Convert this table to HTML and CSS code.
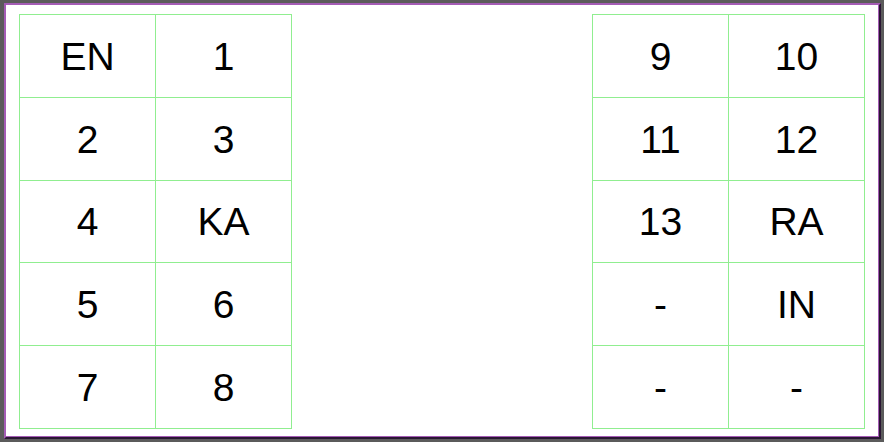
FILE: index.html
```html
<!DOCTYPE html>
<html>
<head>
<meta charset="utf-8">
<link rel="stylesheet" href="styles.css">
</head>
<body>
<div class="frame">
  <div class="grid">
    <div class="cell">EN</div><div class="cell">1</div>
    <div class="cell">2</div><div class="cell">3</div>
    <div class="cell">4</div><div class="cell">KA</div>
    <div class="cell">5</div><div class="cell">6</div>
    <div class="cell">7</div><div class="cell">8</div>
  </div>
  <div class="grid">
    <div class="cell">9</div><div class="cell">10</div>
    <div class="cell">11</div><div class="cell">12</div>
    <div class="cell">13</div><div class="cell">RA</div>
    <div class="cell">-</div><div class="cell">IN</div>
    <div class="cell">-</div><div class="cell">-</div>
  </div>
</div>
</body>
</html>
```
FILE: styles.css
```css
html, body {
  margin: 0;
  padding: 0;
  background: #5b5b5b;
  width: 884px;
  height: 442px;
  overflow: hidden;
}
body {
  padding: 3px 0 0 4px;
  box-sizing: border-box;
}
.frame {
  width: 877px;
  height: 436px;
  box-sizing: border-box;
  background: #fff;
  border-top: 2px solid #a45cb5;
  border-left: 2px solid #a45cb5;
  border-right: 2px solid #2a1633;
  border-bottom: 2px solid #2a1633;
  box-shadow: inset -1px -1px 0 #a45cb5;
  display: flex;
  justify-content: space-between;
  align-items: flex-start;
  padding: 9px 14px 0 13px;
}
.grid {
  display: grid;
  grid-template-columns: 136px 136px;
  grid-template-rows: 83px 83px 82px 83px 83px;
  border-left: 1px solid #90ee90;
  border-top: 1px solid #90ee90;
  width: 273px;
  box-sizing: border-box;
}
.cell {
  box-sizing: border-box;
  border-right: 1px solid #90ee90;
  border-bottom: 1px solid #90ee90;
  display: flex;
  align-items: center;
  justify-content: center;
  font-family: "Liberation Sans", Arial, sans-serif;
  font-size: 39px;
  line-height: 1;
  color: #000;
}
```
